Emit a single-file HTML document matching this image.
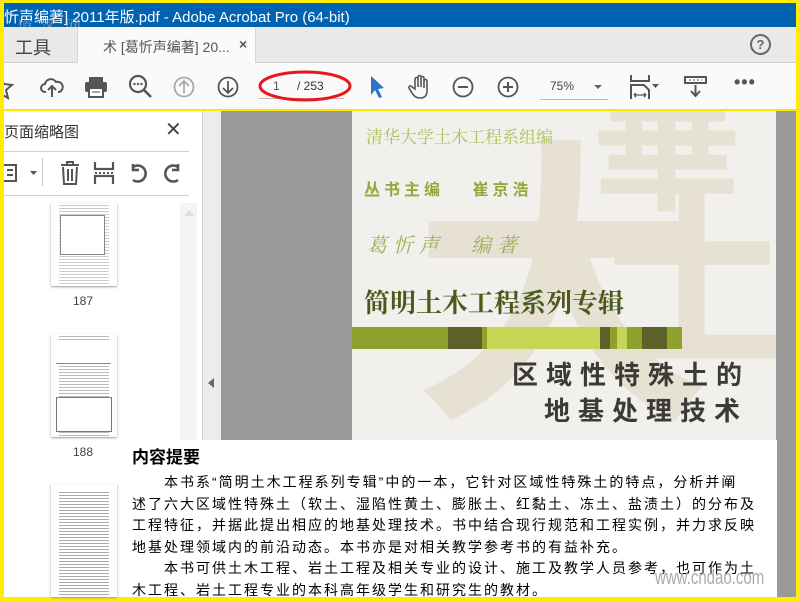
<!DOCTYPE html>
<html><head><meta charset="utf-8"><style>
*{margin:0;padding:0;box-sizing:border-box}
body{width:800px;height:600px;overflow:hidden;background:#ffec00;position:relative;font-family:"Liberation Sans","Noto Sans CJK SC",sans-serif}
.a{position:absolute}
.cn{font-family:"Liberation Sans","Noto Sans CJK SC",sans-serif}
.ser{font-family:"Liberation Serif","Noto Serif CJK SC",serif}
svg{position:absolute}
</style></head><body>
<div class="a" style="left:4px;top:3px;width:792px;height:24px;background:#0063b1"></div>
<div class="a cn" style="left:4px;top:6px;color:#fff;font-size:15px;white-space:nowrap">忻声编著] 2011年版.pdf - Adobe Acrobat Pro (64-bit)</div>
<div class="a ser" style="left:17px;top:14px;color:rgba(160,170,190,.75);font-size:16px;letter-spacing:2px">道 客 网</div>
<div class="a" style="left:4px;top:27px;width:792px;height:36px;background:#e9e9e9;border-bottom:1px solid #cfcfcf"></div>
<div class="a cn" style="left:15px;top:34px;font-size:18px;color:#444">工具</div>
<div class="a" style="left:77px;top:27px;width:179px;height:37px;background:#fafafa;border-left:1px solid #d5d5d5;border-right:1px solid #d5d5d5"></div>
<div class="a cn" style="left:103px;top:37px;font-size:14px;color:#555;white-space:nowrap">术 [葛忻声编著] 20...</div>
<div class="a" style="left:239px;top:36px;font-size:14px;color:#555;font-weight:bold">×</div>
<div class="a" style="left:750px;top:34px;width:21px;height:21px;border:2px solid #666;border-radius:50%;font-size:13px;font-weight:bold;color:#666;text-align:center;line-height:17px">?</div>
<div class="a" style="left:4px;top:63px;width:792px;height:47px;background:#fafafa;border-bottom:1px solid #cfcfcf"></div>
<svg style="left:4px;top:74px" width="16" height="26" viewBox="0 0 16 26"><path d="M-4 2 L0 10 L8 11 L2 16 L4 24 L-3 20" fill="none" stroke="#555" stroke-width="2"/></svg>
<svg style="left:40px;top:75px" width="24" height="24" viewBox="0 0 24 24"><path d="M6 17H5a4 4 0 0 1 0-8 6 6 0 0 1 11-2 5 5 0 0 1 3 10h-1" fill="none" stroke="#555" stroke-width="2"/><path d="M12 22V11M8 15l4-4 4 4" fill="none" stroke="#555" stroke-width="2"/></svg>
<svg style="left:84px;top:76px" width="24" height="22" viewBox="0 0 24 22"><rect x="5" y="1" width="14" height="5" fill="#555"/><rect x="1" y="6" width="22" height="10" rx="2" fill="#555"/><rect x="5" y="12" width="14" height="9" fill="#fff" stroke="#555" stroke-width="2"/><path d="M8 16h8" stroke="#555"/></svg>
<svg style="left:128px;top:74px" width="26" height="26" viewBox="0 0 26 26"><circle cx="10" cy="10" r="8" fill="none" stroke="#555" stroke-width="2.2"/><path d="M16 16l7 7" stroke="#555" stroke-width="2.6"/><circle cx="6.5" cy="10" r="1.2" fill="#555"/><circle cx="10" cy="10" r="1.2" fill="#555"/><circle cx="13.5" cy="10" r="1.2" fill="#555"/></svg>
<svg style="left:173px;top:76px" width="22" height="22" viewBox="0 0 22 22"><circle cx="11" cy="11" r="9.5" fill="none" stroke="#aaa" stroke-width="1.8"/><path d="M11 17V5M6 10l5-5 5 5" fill="none" stroke="#aaa" stroke-width="1.8"/></svg>
<svg style="left:217px;top:76px" width="22" height="22" viewBox="0 0 22 22"><circle cx="11" cy="11" r="9.5" fill="none" stroke="#555" stroke-width="1.8"/><path d="M11 5v12M6 12l5 5 5-5" fill="none" stroke="#555" stroke-width="1.8"/></svg>
<div class="a" style="left:259px;top:98px;width:85px;height:1px;background:#bbb"></div>
<div class="a" style="left:273px;top:79px;font-size:12px;color:#555">1</div>
<div class="a" style="left:297px;top:79px;font-size:12px;color:#333">/ 253</div>
<svg style="left:255px;top:66px" width="100" height="40" viewBox="0 0 100 40"><ellipse cx="50" cy="20" rx="45" ry="14" fill="none" stroke="#e8171b" stroke-width="3"/></svg>
<svg style="left:368px;top:74px" width="16" height="26" viewBox="0 0 16 26"><path d="M3 2v19l4-5 4 8 3-1-4-8 6-1z" fill="#2e75c6"/></svg>
<svg style="left:408px;top:74px" width="24" height="26" viewBox="0 0 24 26"><path d="M7 15V5a1.5 1.5 0 0 1 3 0v8V3a1.5 1.5 0 0 1 3 0v10V4a1.5 1.5 0 0 1 3 0v10V7a1.5 1.5 0 0 1 3 0v10c0 5-3 7-7 7s-6-2-8-5l-3-5a1.5 1.5 0 0 1 3-1z" fill="none" stroke="#555" stroke-width="1.6"/></svg>
<svg style="left:452px;top:76px" width="22" height="22" viewBox="0 0 22 22"><circle cx="11" cy="11" r="9.5" fill="none" stroke="#555" stroke-width="1.8"/><path d="M6 11h10" stroke="#555" stroke-width="2"/></svg>
<svg style="left:497px;top:76px" width="22" height="22" viewBox="0 0 22 22"><circle cx="11" cy="11" r="9.5" fill="none" stroke="#555" stroke-width="1.8"/><path d="M6 11h10M11 6v10" stroke="#555" stroke-width="2"/></svg>
<div class="a" style="left:550px;top:79px;font-size:12px;color:#444">75%</div>
<div class="a" style="left:594px;top:85px;border-left:4px solid transparent;border-right:4px solid transparent;border-top:4px solid #666"></div>
<div class="a" style="left:540px;top:99px;width:68px;height:1px;background:#bbb"></div>
<svg style="left:629px;top:74px" width="34" height="26" viewBox="0 0 34 26"><path d="M2 1v6h18V1" fill="none" stroke="#555" stroke-width="2"/><path d="M2 25V11h13l5 5v9" fill="none" stroke="#555" stroke-width="2"/><path d="M5 21h12M5 21l2-2M5 21l2 2M17 21l-2-2M17 21l-2 2" stroke="#555" stroke-width="1.3"/><path d="M23 10h7l-3.5 4z" fill="#555"/></svg>
<svg style="left:684px;top:75px" width="24" height="24" viewBox="0 0 24 24"><rect x="1" y="2" width="21" height="6" fill="none" stroke="#555" stroke-width="2"/><path d="M5 5h2M9 5h2M13 5h2M17 5h1" stroke="#555"/><path d="M11.5 10v11M7 16l4.5 5 4.5-5" fill="none" stroke="#555" stroke-width="2"/></svg>
<div class="a" style="left:734px;top:72px;font-size:18px;color:#555;letter-spacing:1px;font-weight:bold">•••</div>
<div class="a" style="left:4px;top:111px;width:198px;height:486px;background:#fff"></div>
<div class="a cn" style="left:4px;top:121px;font-size:15px;color:#333">页面缩略图</div>
<div class="a" style="left:165px;top:117px;font-size:20px;color:#444">✕</div>
<div class="a" style="left:4px;top:151px;width:185px;height:1px;background:#d0d0d0"></div>
<div class="a" style="left:4px;top:195px;width:185px;height:1px;background:#d0d0d0"></div>
<svg style="left:4px;top:162px" width="36" height="22" viewBox="0 0 36 22"><path d="M0 3h12v16H0M3 8h6M3 13h6" fill="none" stroke="#555" stroke-width="2"/><path d="M26 9h7l-3.5 4z" fill="#555"/></svg>
<div class="a" style="left:42px;top:158px;width:1px;height:28px;background:#ccc"></div>
<svg style="left:59px;top:161px" width="22" height="24" viewBox="0 0 22 24"><path d="M2 4h18M8 4V1h6v3M4 6l1 17h12l1-17M9 8v12M13 8v12" fill="none" stroke="#555" stroke-width="2"/></svg>
<svg style="left:93px;top:161px" width="22" height="24" viewBox="0 0 22 24"><path d="M2 1v7h18V1M2 23v-8h18v8" fill="none" stroke="#555" stroke-width="2.2"/><path d="M2 12h18" stroke="#555" stroke-dasharray="2 2" stroke-width="2"/></svg>
<svg style="left:126px;top:162px" width="24" height="22" viewBox="0 0 24 22"><path d="M7 18a8 8 0 1 0 0-13M7 2v6h6" fill="none" stroke="#555" stroke-width="2.6"/></svg>
<svg style="left:161px;top:162px" width="24" height="22" viewBox="0 0 24 22"><path d="M17 18a8 8 0 1 1 0-13M17 2v6h-6" fill="none" stroke="#555" stroke-width="2.6"/></svg>
<div class="a" style="left:180px;top:203px;width:17px;height:394px;background:#f4f4f4"></div>
<div class="a" style="left:184px;top:210px;border-left:5px solid transparent;border-right:5px solid transparent;border-bottom:6px solid #ddd"></div>
<div class="a" style="left:51px;top:203px;width:66px;height:83px;background:#fff;box-shadow:0 1px 2px #999;background-image:repeating-linear-gradient(#fff 0 2px,#ccc 2px 3px);background-size:50px 100%;background-repeat:no-repeat;background-position:8px 0"></div>
<div class="a" style="left:60px;top:215px;width:45px;height:40px;background:#fff;border:1px solid #888"></div>
<div class="a" style="left:73px;top:294px;font-size:12px;color:#444">187</div>
<div class="a" style="left:51px;top:334px;width:66px;height:103px;background:#fff;box-shadow:0 1px 2px #999;background-image:repeating-linear-gradient(#fff 0 2px,#bbb 2px 3px);background-size:50px 100%;background-repeat:no-repeat;background-position:8px 0"></div>
<div class="a" style="left:56px;top:340px;width:55px;height:24px;background:#fff;border-bottom:1px solid #888"></div>
<div class="a" style="left:56px;top:397px;width:56px;height:35px;background:#fff;border:1px solid #777"></div>
<div class="a" style="left:73px;top:445px;font-size:12px;color:#444">188</div>
<div class="a" style="left:51px;top:484px;width:66px;height:113px;background:#fff;box-shadow:0 1px 2px #999;background-image:repeating-linear-gradient(#fff 0 2px,#aaa 2px 3px);background-size:50px 96%;background-repeat:no-repeat;background-position:8px 6px"></div>
<div class="a" style="left:202px;top:111px;width:1px;height:486px;background:#ccc"></div>
<div class="a" style="left:203px;top:111px;width:18px;height:486px;background:#ececec"></div>
<div class="a" style="left:208px;top:378px;border-top:5px solid transparent;border-bottom:5px solid transparent;border-right:6px solid #666"></div>
<div class="a" style="left:221px;top:111px;width:575px;height:486px;background:#999"></div>
<div class="a" style="left:352px;top:111px;width:424px;height:330px;background:#f1f0ec;overflow:hidden">
  <div class="a cn" style="left:60px;top:30px;font-size:300px;color:#e6e1d3;font-weight:bold;line-height:1">大</div>
  <div class="a cn" style="left:240px;top:-40px;font-size:150px;color:#e6e1d3;font-weight:bold;line-height:1">華</div>
  <div class="a cn" style="left:240px;top:70px;font-size:200px;color:#e6e1d3;font-weight:bold;line-height:1">土</div>
  <div class="a ser" style="left:14px;top:12px;font-size:17px;color:#b0c060">清华大学土木工程系组编</div>
  <div class="a cn" style="left:12px;top:65px;font-size:16px;color:#95a83c;font-weight:bold;letter-spacing:4px">丛书主编　 崔京浩</div>
  <div class="a ser" style="left:15px;top:118px;font-size:20px;color:#a0ad55;letter-spacing:6px;font-style:italic">葛忻声　编著</div>
  <div class="a ser" style="left:12px;top:172px;font-size:26px;color:#4a5a1c;font-weight:bold">简明土木工程系列专辑</div>
  <div class="a" style="left:0;top:216px;width:330px;height:22px;background:linear-gradient(90deg,#8ea12d 0 96px,#5b6128 96px 130px,#8ea12d 130px 135px,#c7d554 135px 248px,#5b6128 248px 258px,#8ea12d 258px 265px,#c7d554 265px 275px,#8ea12d 275px 290px,#5b6128 290px 315px,#8ea12d 315px)"></div>
  <div class="a cn" style="left:160px;top:244px;font-size:26px;color:#3c3a36;font-weight:bold;letter-spacing:8px">区域性特殊土的</div>
  <div class="a cn" style="left:192px;top:280px;font-size:26px;color:#3c3a36;font-weight:bold;letter-spacing:8px">地基处理技术</div>
</div>
<div class="a" style="left:127px;top:440px;width:650px;height:157px;background:#fff"></div>
<div class="a cn" style="left:132px;top:443px;font-size:17px;font-weight:bold;color:#000">内容提要</div>
<div class="a cn" style="left:132px;top:472px;width:650px;font-size:14px;line-height:21.5px;color:#000;letter-spacing:2px">
<div style="text-indent:32px;white-space:nowrap">本书系“简明土木工程系列专辑”中的一本，它针对区域性特殊土的特点，分析并阐</div>
<div style="white-space:nowrap">述了六大区域性特殊土（软土、湿陷性黄土、膨胀土、红黏土、冻土、盐渍土）的分布及</div>
<div style="white-space:nowrap">工程特征，并据此提出相应的地基处理技术。书中结合现行规范和工程实例，并力求反映</div>
<div style="white-space:nowrap">地基处理领域内的前沿动态。本书亦是对相关教学参考书的有益补充。</div>
<div style="text-indent:32px;white-space:nowrap">本书可供土木工程、岩土工程及相关专业的设计、施工及教学人员参考，也可作为土</div>
<div style="white-space:nowrap">木工程、岩土工程专业的本科高年级学生和研究生的教材。</div>
</div>
<div class="a" style="left:655px;top:567px;font-size:20px;color:#aaa;font-family:'Liberation Sans Narrow','Liberation Sans',sans-serif;transform:scaleX(.75);transform-origin:left">www.cndao.com</div>
<div class="a" style="left:777px;top:440px;width:19px;height:157px;background:#999"></div>
</body></html>
